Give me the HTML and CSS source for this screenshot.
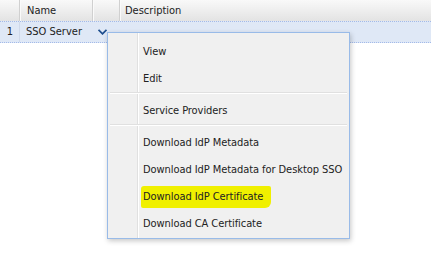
FILE: index.html
```html
<!DOCTYPE html>
<html>
<head>
<meta charset="utf-8">
<link rel="stylesheet" href="styles.css">
</head>
<body>
<div class="grid">
  <div class="header">
    <div class="cell c-num"></div>
    <div class="cell c-name">Name</div>
    <div class="cell c-act"></div>
    <div class="cell c-desc">Description</div>
  </div>
  <div class="row">
    <div class="cell c-num">1</div>
    <div class="cell c-name">SSO Server</div>
    <div class="cell c-act">
      <svg class="chev" width="9" height="6" viewBox="0 0 9 6"><path d="M0.5 0.8 L4.5 4.8 L8.5 0.8" fill="none" stroke="#1f4f8f" stroke-width="1.8"/></svg>
    </div>
    <div class="cell c-desc"></div>
  </div>
</div>

<div class="menu">
  <div class="item">View</div>
  <div class="item">Edit</div>
  <div class="sep"></div>
  <div class="item">Service Providers</div>
  <div class="sep"></div>
  <div class="item">Download IdP Metadata</div>
  <div class="item">Download IdP Metadata for Desktop SSO</div>
  <div class="item"><span class="mark">Download IdP Certificate</span></div>
  <div class="item">Download CA Certificate</div>
</div>
</body>
</html>
```
FILE: styles.css
```css
html, body {
  margin: 0;
  padding: 0;
  background: #fff;
}
body {
  font-family: "DejaVu Sans Condensed", "DejaVu Sans", sans-serif;
  font-size: 11px;
  color: #222;
  width: 431px;
  height: 254px;
  overflow: hidden;
  position: relative;
}
.grid {
  display: flex;
  flex-direction: column;
}
.header {
  display: flex;
  height: 21px;
  background: linear-gradient(#f9f9f9, #e3e3e3);
}
.header .cell {
  border-right: 1px solid #d0d0d0;
  box-shadow: 1px 0 0 #fafafa;
  line-height: 21px;
}
.cell {
  box-sizing: border-box;
  padding-left: 7px;
  white-space: nowrap;
}
.c-num { width: 20px; padding-left: 0; }
.c-name { width: 73px; }
.c-act { width: 27px; }
.c-desc { flex: 1; border-right: none !important; box-shadow: none !important; padding-left: 5px; }
.row {
  display: flex;
  height: 22px;
  background: #dfe8f6;
  border-top: 1px dotted #a3bae9;
  border-bottom: 1px dotted #a3bae9;
  box-sizing: border-box;
}
.row .cell {
  line-height: 20px;
}
.row .c-num {
  text-align: right;
  padding-right: 6px;
  border-right: 1px solid #cfd9ea;
}
.row .c-name { padding-left: 6px; }
.row .c-act { padding-left: 5px; }
.chev {
  display: block;
  margin-top: 7px;
}
.menu {
  position: absolute;
  left: 107px;
  top: 32px;
  width: 243px;
  height: 207px;
  box-sizing: border-box;
  background: #f0f0f0;
  border: 1px solid #99bbe8;
  box-shadow: 1px 2px 5px rgba(0, 0, 0, 0.22);
  padding-top: 5px;
  letter-spacing: -0.07px;
}
.menu::before {
  content: "";
  position: absolute;
  left: 29px;
  top: 0;
  bottom: 0;
  width: 1px;
  background: #e0e0e0;
  box-shadow: 1px 0 0 #fff;
}
.item {
  position: relative;
  height: 27px;
  line-height: 27px;
  padding-left: 35px;
  white-space: nowrap;
}
.sep {
  position: relative;
  height: 1px;
  margin: 0 2px 3px 2px;
  border-top: 1px solid #e0e0e0;
  background: #fff;
}
.mark {
  background: #f0f000;
  margin-left: -2px;
  padding: 4px 8px 5px 2px;
  border-radius: 3px 2px 6px 2px;
}
```
